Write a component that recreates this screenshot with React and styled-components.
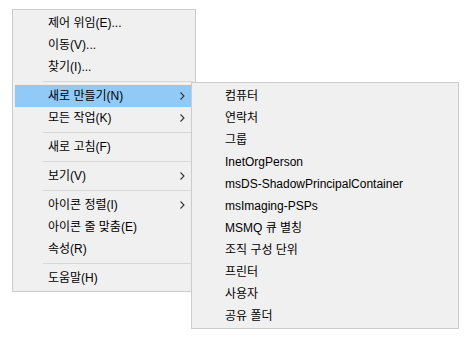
import React from 'react';
import styled, { createGlobalStyle } from 'styled-components';

const GlobalStyle = createGlobalStyle`
  html, body {
    margin: 0;
    padding: 0;
    background: #ffffff;
  }
  body {
    font-family: "Liberation Sans", "Noto Sans CJK KR", sans-serif;
    font-size: 12px;
    color: #000;
  }
`;

const Desktop = styled.div`
  position: relative;
  width: 465px;
  height: 338px;
  padding: 9px 0 0 12px;
  box-sizing: border-box;
`;

const Menu = styled.div`
  position: ${props => (props.$flyout ? 'absolute' : 'relative')};
  left: ${props => (props.$flyout ? '191px' : 'auto')};
  top: ${props => (props.$flyout ? '82px' : 'auto')};
  width: ${props => props.$width}px;
  box-sizing: border-box;
  background: #f0f0f0;
  border: 1px solid #cccccc;
  padding: ${props => (props.$flyout ? '2px 2px 1px' : '2px')};
  display: flex;
  flex-direction: column;
  z-index: ${props => (props.$flyout ? 2 : 1)};
`;

const Item = styled.div`
  height: 22px;
  display: flex;
  align-items: center;
  padding-left: ${props => props.$indent}px;
  padding-right: 8px;
  background: ${props => (props.$active ? '#91c9f7' : 'transparent')};
  white-space: nowrap;
  line-height: 22px;
`;

const Label = styled.span`
  flex: 1;
`;

const Separator = styled.div`
  height: 7px;
  display: flex;
  align-items: center;
  padding-left: 28px;

  &::after {
    content: '';
    flex: 1;
    height: 1px;
    background: #d7d7d7;
  }
`;

const Chevron = () => (
  <svg width="5" height="8" viewBox="0 0 5 8">
    <path d="M0.5 0.5 L4 4 L0.5 7.5" fill="none" stroke="#333" strokeWidth="1.1" />
  </svg>
);

const mainItems = [
  { label: '제어 위임(E)...' },
  { label: '이동(V)...' },
  { label: '찾기(I)...' },
  { sep: true },
  { label: '새로 만들기(N)', sub: true, active: true },
  { label: '모든 작업(K)', sub: true },
  { sep: true },
  { label: '새로 고침(F)' },
  { sep: true },
  { label: '보기(V)', sub: true },
  { sep: true },
  { label: '아이콘 정렬(I)', sub: true },
  { label: '아이콘 줄 맞춤(E)' },
  { label: '속성(R)' },
  { sep: true },
  { label: '도움말(H)' },
];

const newItems = [
  '컴퓨터',
  '연락처',
  '그룹',
  'InetOrgPerson',
  'msDS-ShadowPrincipalContainer',
  'msImaging-PSPs',
  'MSMQ 큐 별칭',
  '조직 구성 단위',
  '프린터',
  '사용자',
  '공유 폴더',
];

export default function App() {
  return (
    <>
      <GlobalStyle />
      <Desktop>
        <Menu $width={184}>
          {mainItems.map((it, i) =>
            it.sep ? (
              <Separator key={i} />
            ) : (
              <Item key={i} $indent={33} $active={it.active}>
                <Label>{it.label}</Label>
                {it.sub && <Chevron />}
              </Item>
            )
          )}
        </Menu>
        <Menu $flyout $width={268}>
          {newItems.map(label => (
            <Item key={label} $indent={31}>
              <Label>{label}</Label>
            </Item>
          ))}
        </Menu>
      </Desktop>
    </>
  );
}
